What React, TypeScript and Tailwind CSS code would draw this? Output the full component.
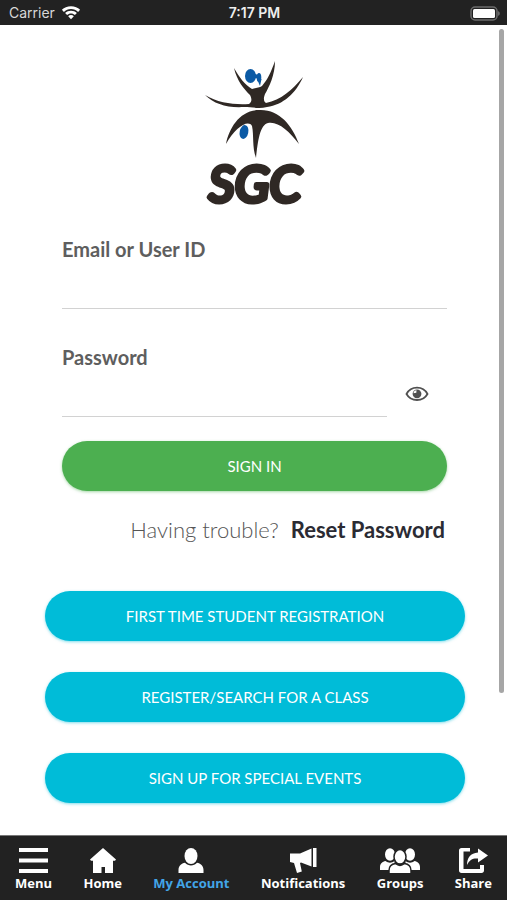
import { useState } from "react";

function WifiIcon() {
  return (
    <svg width="20" height="14" viewBox="0 0 20 14" fill="#fff" aria-hidden="true">
      <path d="M10 0.2C6.3 0.2 3.2 1.6 0.9 3.8L2.9 5.9C4.7 4.2 7.2 3.1 10 3.1s5.3 1.1 7.1 2.8l2-2.1C16.8 1.6 13.7 0.2 10 0.2z" />
      <path d="M10 4.7C7.7 4.7 5.7 5.6 4.1 7l2 2.1C7.1 8.1 8.5 7.5 10 7.5s2.9 0.6 3.9 1.6l2-2.1C14.3 5.6 12.3 4.7 10 4.7z" />
      <path d="M10 9.1c-1.1 0-2 0.4-2.8 1.1L10 13.3l2.8-3.1C12 9.5 11.1 9.1 10 9.1z" />
    </svg>
  );
}

function BatteryIcon() {
  return (
    <svg width="31" height="15" viewBox="0 0 31 15" aria-hidden="true">
      <rect x="2" y="1" width="26" height="13" rx="4" fill="#222" stroke="#6c6c6c" strokeWidth="1.5" />
      <rect x="4" y="3" width="22" height="9" rx="1.5" fill="#fff" />
      <path d="M29.300 5.200c1.700 0.500 1.700 4 0 4.500z" fill="#8a8a8a" />
    </svg>
  );
}

function Logo() {
  return (
    <svg width="106" height="164" viewBox="0 0 106 164" role="img" aria-label="SGC">
      <g transform="translate(-1 3)">
        <g fill="#2f2824">
          <path d="M4 35C17 43 34 45 48 44C51 42 51 39 49 35C43 29 36 21 33 8C38 17 44 25 51 29C54 28 58 28 61 26C67 19 70 12 74 1C74 15 68 27 64 34C62 39 63 42 65 43C80 40 91 30 102 17C95 33 82 45 66 47C58 49 51 47 43 47C26 48 13 44 4 35z" />
          <path d="M25 84C28 68 39 50 58 50C78 49 91 65 98 84C88 71 77 61 67 63C59 65 57 80 55 98C51 87 53 75 51 66C47 59 34 68 25 84z" />
        </g>
        <g fill="#0b5aa5">
          <ellipse cx="49.500" cy="16" rx="5.500" ry="7" />
          <ellipse cx="58" cy="17.500" rx="2.300" ry="4.500" />
          <path d="M54 14l4 1v4l-4-1z" />
          <path d="M56 19l3 7 1.500-7z" />
          <ellipse cx="43" cy="72" rx="4.300" ry="7" transform="rotate(12 43 72)" />
        </g>
      </g>
      <text
        x="53"
        y="145"
        textAnchor="middle"
        className="font-['Lato',sans-serif] text-[51px] font-normal italic"
        fill="#2f2824"
        stroke="#2f2824"
        strokeWidth="5"
        strokeLinejoin="round"
      >
        SGC
      </text>
    </svg>
  );
}

function EyeIcon() {
  return (
    <svg width="24" height="18" viewBox="0 0 24 18" fill="none" aria-hidden="true">
      <path d="M1.500 9C6 0.500 18 0.500 22.500 9C18 17 6 17 1.500 9z" stroke="#505050" strokeWidth="1.800" />
      <circle cx="12" cy="8.800" r="4.400" fill="#505050" />
      <path d="M8.500 8.300C8.500 6.500 10 5.300 11.500 5.300L11.300 7.700z" fill="#fff" />
    </svg>
  );
}

const navItems = [
  {
    label: "Menu",
    width: 29,
    shape: (
      <>
        <path d="M0 0h29v4H0z" />
        <path d="M0 10.500h29v4H0z" />
        <path d="M0 21h29v4H0z" />
      </>
    ),
  },
  {
    label: "Home",
    width: 26,
    shape: (
      <path d="M13 0l13 11.500-1 1.200h-2V25h-8v-6h-3.500v6H3V12.700H1L0 11.500z" />
    ),
  },
  {
    label: "My Account",
    width: 26,
    active: true,
    shape: (
      <>
        <ellipse cx="13" cy="8" rx="6.500" ry="8" />
        <path d="M0.500 25v-3c0-4 3-6.500 6.500-7.200 3.500 3.700 8.500 3.700 12 0 3.500 0.700 6.500 3.200 6.500 7.200v3z" />
      </>
    ),
  },
  {
    label: "Notifications",
    width: 28,
    shape: (
      <>
        <path d="M24 0h3.500v19H24z" />
        <path d="M1 5.500h10L22.500 0.500v18L12 14.500l-1 0.500 1.800 8.500L8 25 5 15 1 14z" />
      </>
    ),
  },
  {
    label: "Groups",
    width: 40,
    shape: (
      <>
        <ellipse cx="10" cy="6.500" rx="5" ry="6.200" />
        <ellipse cx="30" cy="6.500" rx="5" ry="6.200" />
        <path d="M0 22v-3c0-3.500 2.500-5.500 5.500-6 3 2.300 6 2.300 9 0v9z" />
        <path d="M40 22v-3c0-3.500-2.500-5.500-5.500-6-3 2.300-6 2.300-9 0v9z" />
        <g stroke="#222" strokeWidth="1.500">
          <ellipse cx="20" cy="8.800" rx="6" ry="7.200" />
          <path d="M9 25.700v-3.200c0-4 3-6.500 6.500-7 3 2.500 6 2.500 9 0 3.500 0.500 6.500 3 6.500 7v3.200z" />
        </g>
      </>
    ),
  },
  {
    label: "Share",
    width: 29,
    shape: (
      <>
        <path d="M11 0v3.500H4.500V21H21v-4h4v5.500c0 1.500-1 2.500-2.500 2.500h-20C1 25 0 24 0 22.500v-20C0 1 1 0 2.500 0z" />
        <path d="M19 0.500L29 7.500 19 14.500v-4C14 10 10.500 11.500 8 17 8 10 11.500 5 19 4.500z" />
      </>
    ),
  },
];

const links = [
  "First Time Student Registration",
  "Register/Search for a Class",
  "Sign Up for Special Events",
];

export default function App() {
  const [showPassword, setShowPassword] = useState(false);

  return (
    <div className="flex min-h-screen flex-col bg-white font-['Lato',sans-serif]">
      {/* status bar */}
      <header className="grid h-[25px] grid-cols-3 items-center bg-[#222] pt-px pr-[7px] pl-[9px] font-['Inter',sans-serif] text-sm text-[#eee]">
        <div className="flex items-center gap-1.5 text-[#d8d8d8]">
          Carrier
          <WifiIcon />
        </div>
        <div className="text-center font-semibold">7:17 PM</div>
        <div className="flex justify-end">
          <BatteryIcon />
        </div>
      </header>

      <main className="relative flex-1 pt-8 pr-[42px] pl-[45px]">
        <div className="absolute top-1 right-[3px] h-[82%] w-[5px] rounded-full bg-[#a6a6a6]" />

        <form className="pr-[18px] pl-[17px]" onSubmit={(e) => e.preventDefault()}>
          <div className="flex justify-center">
            <Logo />
          </div>

          <label htmlFor="user" className="mt-3.5 block text-xl leading-7 font-bold text-[#5e5e5e]">
            Email or User ID
          </label>
          <input
            id="user"
            type="text"
            className="block h-[46px] w-full border-b border-[#d2d2d2] text-xl outline-none"
          />

          <label htmlFor="password" className="mt-[34px] block text-xl leading-7 font-bold text-[#5e5e5e]">
            Password
          </label>
          <div className="flex">
            <input
              id="password"
              type={showPassword ? "text" : "password"}
              className="block h-[46px] min-w-0 flex-1 border-b border-[#d2d2d2] text-xl outline-none"
            />
            <button
              type="button"
              aria-label="Show password"
              className="flex h-[46px] w-[60px] items-center justify-center"
              onClick={() => setShowPassword(!showPassword)}
            >
              <EyeIcon />
            </button>
          </div>

          <button
            type="submit"
            className="mt-6 h-[50px] w-full rounded-full bg-[#4caf50] text-[15px] text-white uppercase shadow-[0_1px_3px_#4caf5080]"
          >
            Sign In
          </button>

          <p className="mt-[23px] flex justify-end gap-3 pr-0.5 text-[22px] leading-8 font-light text-[#555]">
            Having trouble?
            <a href="#reset" className="font-bold text-[#2b2b33]">
              Reset Password
            </a>
          </p>
        </form>

        <div className="mt-[45px] mb-8 flex flex-col gap-[31px]">
          {links.map((link) => (
            <button
              key={link}
              type="button"
              className="h-[50px] rounded-full bg-[#00bcd8] text-[15px] text-white uppercase shadow-[0_1px_3px_#00bcd880]"
            >
              {link}
            </button>
          ))}
        </div>
      </main>

      {/* tab bar */}
      <nav className="flex h-[65px] justify-between border-t border-[#777] bg-[#222] px-[15px] pt-3 font-['Open_Sans',sans-serif] text-[13px] leading-5 font-bold text-white">
        {navItems.map((item) => (
          <a
            key={item.label}
            href="#"
            className={`flex flex-col items-center ${item.active ? "text-[#42a5e8]" : ""}`}
          >
            <svg width={item.width} height="25" viewBox={`0 0 ${item.width} 25`} fill="#fff" aria-hidden="true">
              {item.shape}
            </svg>
            {item.label}
          </a>
        ))}
      </nav>
    </div>
  );
}
